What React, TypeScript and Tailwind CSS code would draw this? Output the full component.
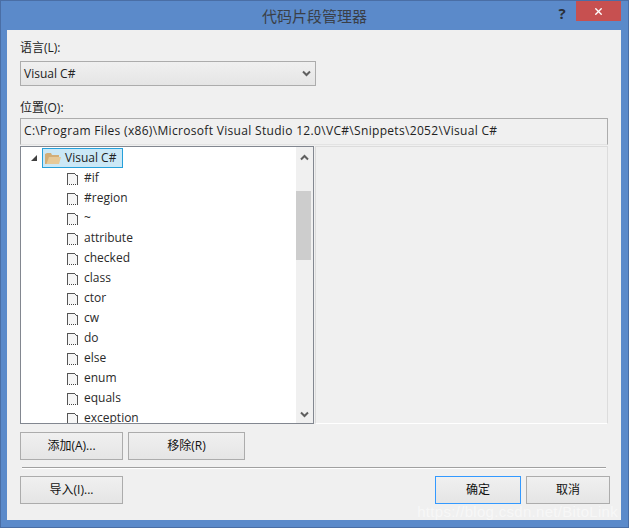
import { X } from "lucide-react";

const snippets = ["#if", "#region", "~", "attribute", "checked", "class", "ctor", "cw", "do", "else", "enum", "equals", "exception"];

function FileIcon() {
  return (
    <svg width="13" height="15" viewBox="0 0 13 15" className="shrink-0">
      <path d="M1.5 13V2.5H8.5L11.5 5V13" fill="#f6f6f6" stroke="#555" strokeWidth="1" shapeRendering="crispEdges" />
      <path d="M1 13.5H12" stroke="#444" strokeWidth="1" strokeDasharray="1 1" shapeRendering="crispEdges" />
    </svg>
  );
}

function FolderIcon() {
  return (
    <svg width="16" height="14" viewBox="0 0 16 14" className="shrink-0">
      <path d="M0 3V13H14V4H7L6 2H2Z" fill="#d2ae78" />
      <path d="M1.5 13L4 6H16L14 13Z" fill="#e6c998" />
    </svg>
  );
}

function Chevron({ up }: { up?: boolean }) {
  return (
    <svg width="9" height="7" viewBox="0 0 9 7" className={up ? "" : "rotate-180"}>
      <path d="M1 5.5L4.5 2L8 5.5" fill="none" stroke="#5f5f5f" strokeWidth="2" />
    </svg>
  );
}

function Btn({ label, className }: { label: string; className: string }) {
  return (
    <div className={`flex h-[28px] items-center justify-center border bg-gradient-to-b from-[#f0f0f0] to-[#e5e5e5] text-[#111] ${className}`}>
      {label}
    </div>
  );
}

export default function App() {
  return (
    <div className="relative flex h-[528px] w-[629px] flex-col overflow-hidden border border-[#4a6ea5] bg-[#5b8aca] font-['Open_Sans','Noto_Sans_CJK_SC',sans-serif] text-[12px] text-[#222]">
      <div className="flex h-[29px] shrink-0 items-start">
        <div className="flex-1 pt-[5px] pl-[84px] text-center text-[15px] leading-[20px] text-[#3a3f47]">代码片段管理器</div>
        <div className="w-[32px] pt-[2px] pl-[4px] text-center text-[15px] leading-[20px] font-bold text-[#2a2f38]">?</div>
        <div className="mr-[7px] flex h-[20px] w-[45px] items-center justify-center bg-[#c75050]">
          <X size={11} strokeWidth={3} color="#fff" />
        </div>
      </div>
      <div className="mr-[7px] ml-[6px] flex flex-1 flex-col bg-[#f0f0f0] pr-[11px] pl-[13px]">
        <div className="mt-[8px] h-[20px] leading-[20px]">语言(L):</div>
        <div className="mt-[3px] flex h-[25px] w-[296px] items-center justify-between border border-[#acacac] bg-gradient-to-b from-[#f0f0f0] to-[#e5e5e5] pr-[4px] pl-[3px]">
          <span>Visual C#</span>
          <Chevron />
        </div>
        <div className="mt-[12px] h-[20px] leading-[20px]">位置(O):</div>
        <div className="flex h-[27px] w-[588px] items-center border border-[#acacac] border-b-[#e3e3e3] bg-[#f0f0f0] pb-[2px] pl-[3px] tracking-[0.32px] whitespace-nowrap">
          C:\Program Files (x86)\Microsoft Visual Studio 12.0\VC#\Snippets\2052\Visual C#
        </div>
        <div className="mt-[1px] flex h-[278px] w-[588px] gap-[1px]">
          <div className="flex w-[294px] overflow-hidden border border-[#828790] bg-white">
            <div className="flex-1 overflow-hidden pt-[1px]">
              <div className="flex h-[20px] items-center">
                <svg width="8" height="8" viewBox="0 0 8 8" className="mr-[4px] ml-[9px]">
                  <path d="M7 1V7H1Z" fill="#404040" />
                </svg>
                <div className="flex h-[20px] w-[81px] items-center gap-[3px] border border-[#26a0da] bg-[#cbe8f6] pl-[2px]">
                  <FolderIcon />
                  <span className="pl-[1px]">Visual C#</span>
                </div>
              </div>
              {snippets.map((name) => (
                <div key={name} className="flex h-[20px] items-center pl-[45px]">
                  <FileIcon />
                  <span className="pl-[5px] text-[#2a2a2a]">{name}</span>
                </div>
              ))}
            </div>
            <div className="flex w-[17px] shrink-0 flex-col bg-[#f0f0f0]">
              <div className="flex h-[17px] items-center justify-center pt-[3px]">
                <Chevron up />
              </div>
              <div className="mt-[27px] h-[69px] w-[15px] bg-[#cdcdcd]" />
              <div className="flex-1" />
              <div className="flex h-[17px] items-center justify-center">
                <Chevron />
              </div>
            </div>
          </div>
          <div className="flex-1 border border-[#dcdcdc] border-b-white bg-[#f0f0f0]" />
        </div>
        <div className="mt-[8px] flex gap-[5px]">
          <Btn label="添加(A)..." className="w-[103px] border-[#acacac]" />
          <Btn label="移除(R)" className="w-[117px] border-[#acacac]" />
        </div>
        <div className="mt-[7px] ml-[2px] h-[2px] w-[584px] border-b border-white bg-[#a0a0a0]" />
        <div className="mt-[7px] flex">
          <Btn label="导入(I)..." className="w-[103px] border-[#acacac]" />
          <Btn label="确定" className="ml-[312px] w-[86px] border-[#3399ff]" />
          <Btn label="取消" className="ml-[5px] w-[84px] border-[#acacac]" />
        </div>
      </div>
      <div className="h-[7px] shrink-0" />
      <div className="absolute right-[10px] bottom-[5px] font-['Liberation_Sans',sans-serif] text-[15px] leading-[20px] tracking-[0.3px] text-white/50">https://blog.csdn.net/BitoLink</div>
    </div>
  );
}
